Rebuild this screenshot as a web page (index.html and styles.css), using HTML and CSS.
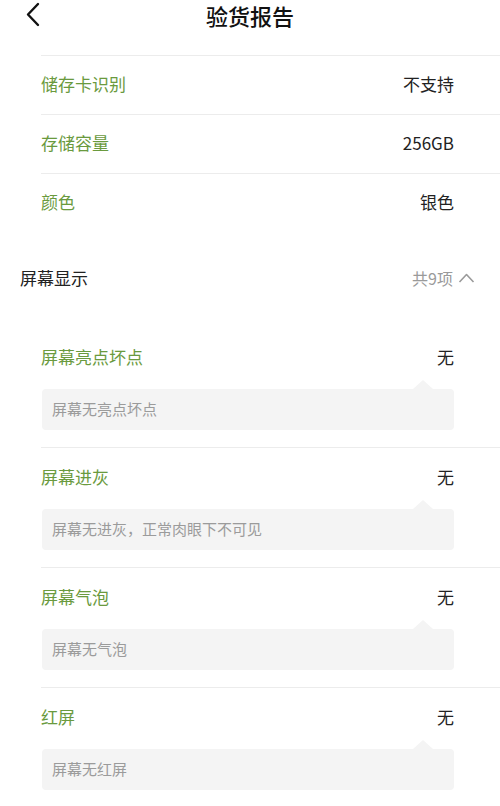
FILE: index.html
```html
<!DOCTYPE html>
<html lang="zh-CN">
<head>
    <meta charset="UTF-8">
    <title>验货报告</title>
    <link rel="stylesheet" href="styles.css">
</head>
<body>

    <div class="header">
        <span class="back">
            <svg width="16" height="26" viewBox="0 0 16 26">
                <path d="M13 3 L3 13.5 L13 24" fill="none" stroke="#111" stroke-width="2.4" stroke-linecap="round" stroke-linejoin="round"/>
            </svg>
        </span>
        <h1 class="title">验货报告</h1>
    </div>

    <!-- 기본 사양 -->
    <div class="spec-list">
        <div class="spec-row">
            <span class="label">储存卡识别</span>
            <span class="value">不支持</span>
        </div>
        <div class="spec-row">
            <span class="label">存储容量</span>
            <span class="value">256GB</span>
        </div>
        <div class="spec-row">
            <span class="label">颜色</span>
            <span class="value">银色</span>
        </div>
    </div>

    <div class="section-head">
        <span class="section-name">屏幕显示</span>
        <span class="section-count">
            共9项
            <svg width="17" height="12" viewBox="0 0 17 12">
                <path d="M1.5 10 L8.5 2.5 L15.5 10" fill="none" stroke="#9a9a9a" stroke-width="1.6" stroke-linejoin="round"/>
            </svg>
        </span>
    </div>

    <div class="check-list">
        <div class="check-item first">
            <div class="check-row">
                <span class="label">屏幕亮点坏点</span>
                <span class="value">无</span>
            </div>
            <div class="note">屏幕无亮点坏点</div>
        </div>
        <div class="check-item">
            <div class="check-row">
                <span class="label">屏幕进灰</span>
                <span class="value">无</span>
            </div>
            <div class="note">屏幕无进灰，正常肉眼下不可见</div>
        </div>
        <div class="check-item">
            <div class="check-row">
                <span class="label">屏幕气泡</span>
                <span class="value">无</span>
            </div>
            <div class="note">屏幕无气泡</div>
        </div>
        <div class="check-item">
            <div class="check-row">
                <span class="label">红屏</span>
                <span class="value">无</span>
            </div>
            <div class="note">屏幕无红屏</div>
        </div>
    </div>

</body>
</html>
```

FILE: styles.css
```css
body{
    margin: 0;
    background-color: #ffffff;
    font-family: "Noto Sans CJK SC", "Noto Sans", sans-serif;
    color: #222222;
    overflow: hidden;
}

.header{
    height: 30px;
    display: flex;
    align-items: center;
    justify-content: center;
    position: relative;
}
.back{
    position: absolute; /* 왼쪽 위 뒤로가기 */
    left: 25px;
    top: 1px;
}
.title{
    margin: 0;
    font-size: 22px;
    font-weight: 500;
    line-height: 30px;
    color: #111111;
}

.spec-list{
    margin-top: 25px;
    margin-left: 41px;
}
.spec-row{
    display: flex;
    justify-content: space-between;
    align-items: center;
    height: 55px;
    padding-bottom: 3px;
    border-top: 1px solid #ececec;
    padding-right: 46px;
}

.label{
    font-size: 17px;
    color: #6a9a3e;
}
.value{
    font-size: 17px;
    color: #222222;
}

.section-head{
    display: flex;
    justify-content: space-between;
    align-items: center;
    height: 91px;
    padding: 0 25px 4px 20px;
}
.section-name{
    font-size: 17px;
    color: #222222;
}
.section-count{
    display: flex;
    align-items: center;
    gap: 5px;
    font-size: 16px;
    color: #9a9a9a;
}

.check-list{
    margin-left: 41px;
}
.check-item{
    border-top: 1px solid #ececec;
    padding-right: 46px;
    padding-bottom: 17px;
}
.check-item.first{
    border-top-color: transparent;
}
.check-row{
    display: flex;
    justify-content: space-between;
    align-items: center;
    padding-top: 17px;
    line-height: 24px;
}
.note{
    position: relative;
    margin: 20px 0 0 1px;
    height: 41px;
    line-height: 40px;
    padding-left: 10px;
    background-color: #f4f4f4;
    border-radius: 4px;
    font-size: 15px;
    color: #9b9b9b;
}
.note::before{ /* 위쪽 작은 삼각형 */
    content: "";
    position: absolute;
    bottom: 100%;
    right: 21px;
    border-left: 10px solid transparent;
    border-right: 10px solid transparent;
    border-bottom: 9px solid #f4f4f4;
}
```
